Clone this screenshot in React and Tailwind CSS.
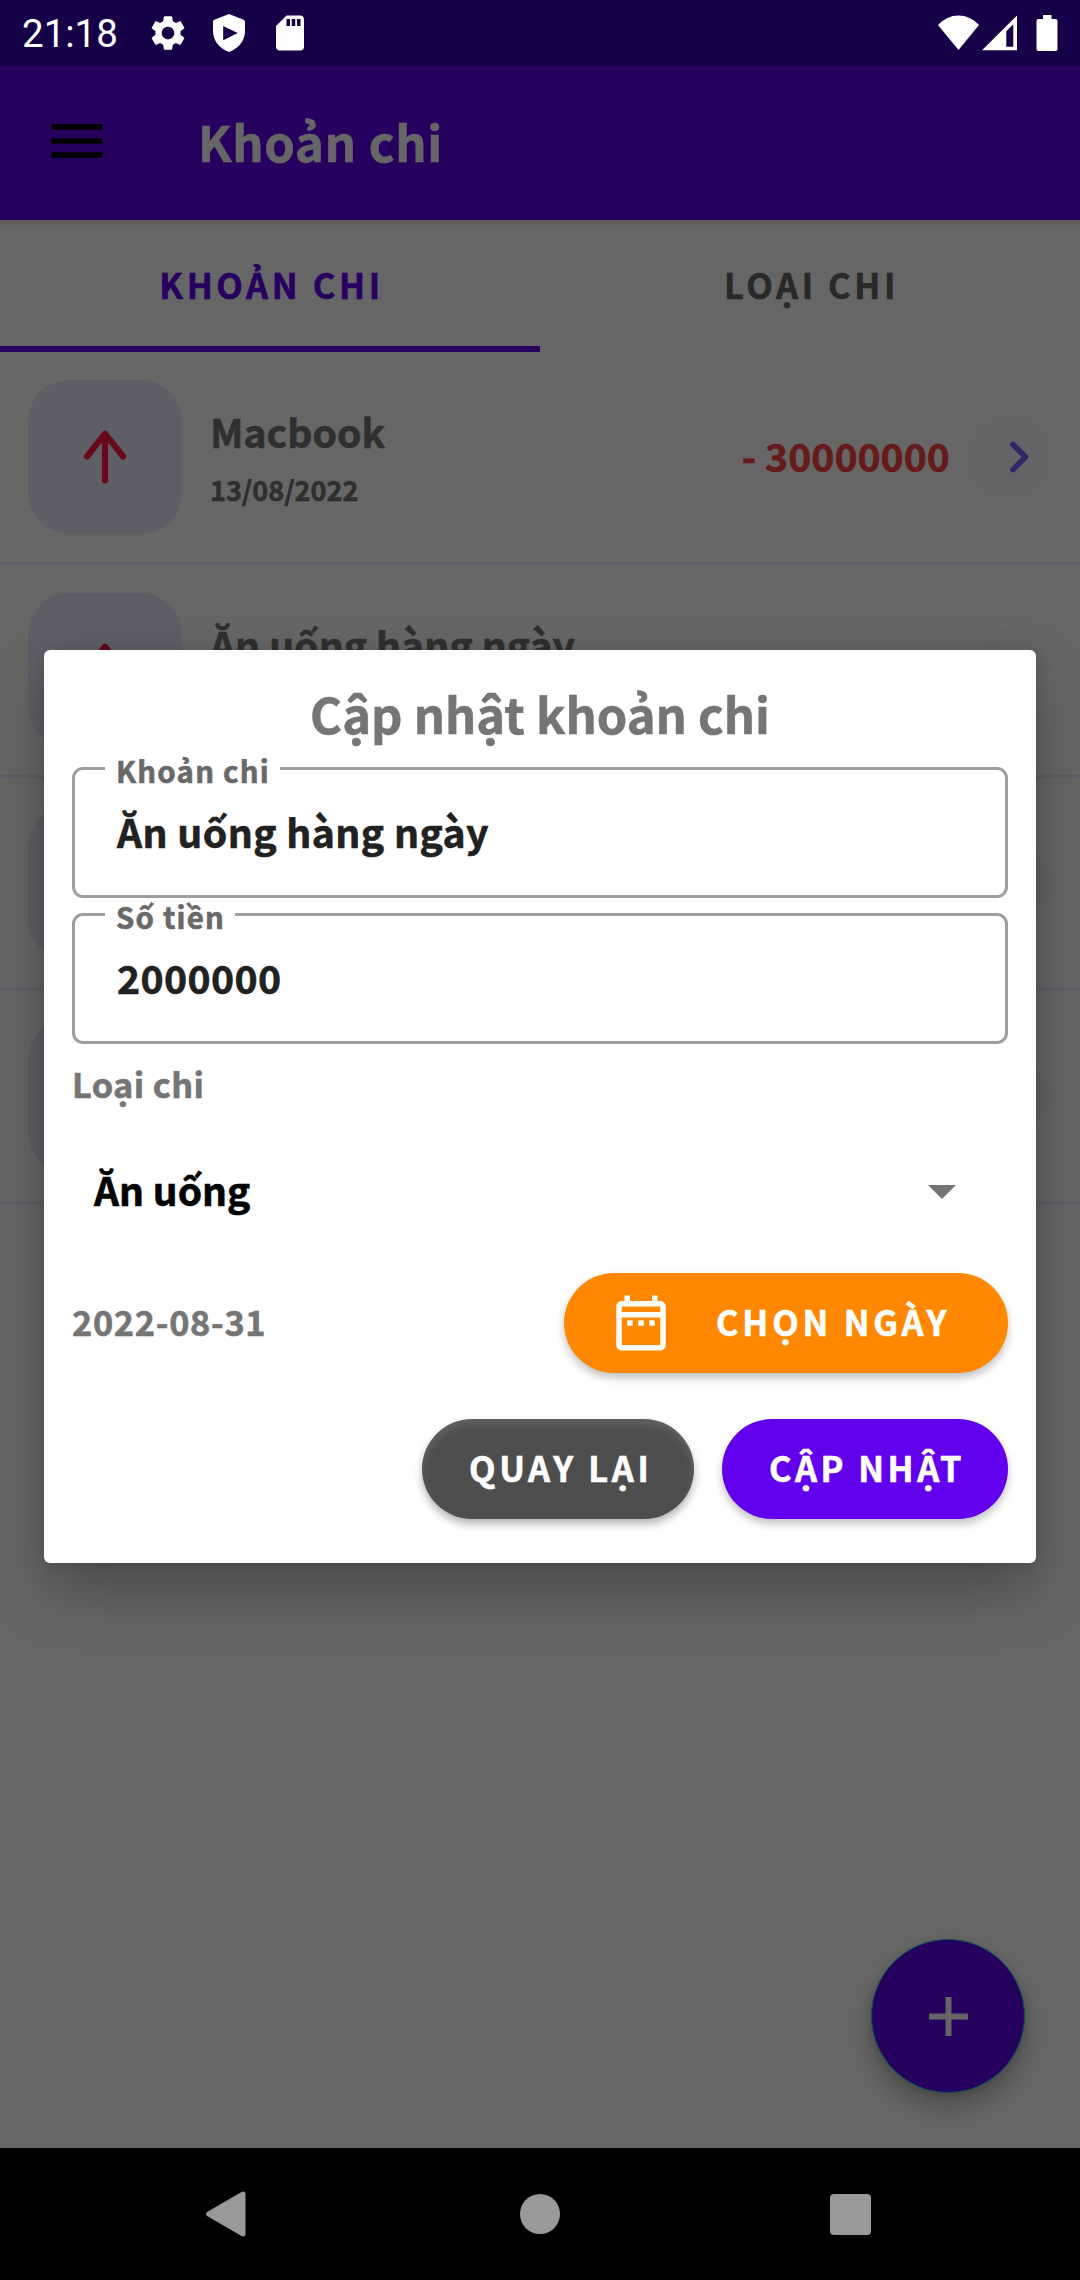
import React from "react";

const FONT = "font-['Noto_Sans_CJK_SC','Noto_Sans',sans-serif] font-bold [-webkit-text-stroke:0.6px]";

const rows = [
  { title: "Macbook", date: "13/08/2022", amount: "- 30000000" },
  { title: "Ăn uống hàng ngày" },
  {},
  {},
];

function SettingsIcon() {
  return (
    <svg viewBox="0 0 24 24" className="ml-[29px] size-[42px]" fill="currentColor">
      <path d="M19.14 12.94c.04-.3.06-.61.06-.94 0-.32-.02-.64-.07-.94l2.03-1.58c.18-.14.23-.41.12-.61l-1.92-3.32c-.12-.22-.37-.29-.59-.22l-2.39.96c-.5-.38-1.03-.7-1.62-.94l-.36-2.54c-.04-.24-.24-.41-.48-.41h-3.84c-.24 0-.43.17-.47.41l-.36 2.54c-.59.24-1.13.57-1.62.94l-2.39-.96c-.22-.08-.47 0-.59.22L2.74 8.87c-.12.21-.08.47.12.61l2.03 1.58c-.05.3-.09.63-.09.94s.02.64.07.94l-2.03 1.58c-.18.14-.23.41-.12.61l1.92 3.32c.12.22.37.29.59.22l2.39-.96c.5.38 1.03.7 1.62.94l.36 2.54c.05.24.24.41.48.41h3.84c.24 0 .44-.17.47-.41l.36-2.54c.59-.24 1.13-.56 1.62-.94l2.39.96c.22.08.47 0 .59-.22l1.92-3.32c.12-.22.07-.47-.12-.61l-2.01-1.58zM12 15.6c-1.98 0-3.6-1.62-3.6-3.6s1.62-3.6 3.6-3.6 3.6 1.62 3.6 3.6-1.62 3.6-3.6 3.6z" />
    </svg>
  );
}

function ShieldIcon() {
  return (
    <svg viewBox="0 0 32 38" className="ml-6 h-[38px] w-8" fill="currentColor" fillRule="evenodd">
      <path d="M16 0L30.6 5.7Q32 6.3 32 7.8V17C32 26.5 25.8 34.6 16 38C6.2 34.6 0 26.5 0 17V7.8Q0 6.3 1.4 5.7ZM10.2 12V26.3L24.7 19Z" />
    </svg>
  );
}

function SdCardIcon() {
  return (
    <svg viewBox="0 0 24 24" className="ml-6 size-[42px]" fill="currentColor">
      <path d="M18 2h-8L4.020 8 4 20c0 1.100.9 2 2 2h12c1.100 0 2-.9 2-2V4c0-1.100-.9-2-2-2zm-6 6h-2V4h2v4zm3 0h-2V4h2v4zm3 0h-2V4h2v4z" />
    </svg>
  );
}

function StatusBar() {
  return (
    <div className="absolute inset-x-0 top-0 z-20 flex h-[66px] items-center pl-[22px] pr-[22px] text-white">
      <span className="w-24 pt-[3px] font-['Roboto',sans-serif] text-[38.5px] leading-none font-normal whitespace-nowrap [-webkit-text-stroke:0]">21:18</span>
      <SettingsIcon />
      <ShieldIcon />
      <SdCardIcon />
      <svg viewBox="0 0 41 36" className="ml-auto h-9 w-[41px]" fill="currentColor">
        <path d="M20.5 35L0 10Q8.8 .5 20.5 .5T41 10Z" />
      </svg>
      <svg viewBox="0 0 35 36" className="ml-[3px] h-9 w-[35px]" fill="currentColor" fillRule="evenodd">
        <path d="M0 35.3H35V.5ZM24.3 16.3L31.3 9.2V31.7H24.3Z" />
      </svg>
      <svg viewBox="0 0 22 36" className="ml-[19px] h-9 w-[22px]" fill="currentColor">
        <path d="M7 0H15.5V4H19.5Q21.5 4 21.5 6V34Q21.5 36 19.5 36H2.5Q.5 36 .5 34V6Q.5 4 2.5 4H7Z" />
      </svg>
    </div>
  );
}

function ExpenseRow({ title, date, amount }) {
  return (
    <div className="flex h-[213px] items-start border-b-[3px] border-[#edebff] pt-7 pl-7 pr-[33px]">
      <div className="grid size-[154px] shrink-0 place-items-center rounded-[41px] bg-[#edebff]">
        <svg viewBox="0 0 44 54" className="h-[54px] w-11" fill="none" stroke="#ff1744" strokeWidth="6.2" strokeLinecap="round" strokeLinejoin="round">
          <path d="M22 50.5V4M4 26.5L22 3.7L40 26.5" />
        </svg>
      </div>
      <div className="mt-[22px] ml-7 flex flex-col whitespace-nowrap text-[#757575]">
        <div className="h-[58px] text-[39.2px] leading-[58px]">{title}</div>
        <div className="text-[27px] leading-[60px]">{date}</div>
      </div>
      <div className="ml-auto flex h-[154px] items-center">
        <div className="pb-[5px] text-[39.2px] leading-[58px] text-[#ff4444]">{amount}</div>
        <div className="ml-[21px] flex size-[76px] items-center rounded-full bg-[#f9f7fe] pl-[38px] shadow-[0_0_7px_4px_#fcfbfe]">
          <svg viewBox="0 0 20 32" className="h-8 w-5" fill="none" stroke="#7861ff" strokeWidth="5.6" strokeLinecap="round" strokeLinejoin="round">
            <path d="M4 3.5L16.5 16L4 28.5" />
          </svg>
        </div>
      </div>
    </div>
  );
}

function OutlinedField({ label, value }) {
  return (
    <div className="relative flex h-[131px] items-center rounded-[11px] border-[3px] border-[#9e9e9e] pb-[3px] pl-[42px]">
      <span className="absolute -top-[14px] left-[30px] bg-white pr-[10px] pl-[11px] text-[29.4px] leading-[29px] tracking-[1.2px] whitespace-nowrap text-[#696969]">
        {label}
      </span>
      <span className="text-[39.2px] leading-[58px] tracking-[0.4px] text-[#212121]">{value}</span>
    </div>
  );
}

const pill =
  "flex h-[100px] items-center rounded-full text-[34.4px] whitespace-nowrap text-white";

function Dialog() {
  return (
    <div className="flex w-[992px] flex-col rounded-md bg-white px-7 pt-[27px] pb-11 shadow-[0_28px_60px_rgba(0,0,0,0.28),0_0_12px_rgba(0,0,0,0.08)]">
      <h2 className="text-center text-[48.9px] leading-[71px] text-[#757575]">Cập nhật khoản chi</h2>
      <div className="mt-[19px] flex flex-col gap-[15px]">
        <OutlinedField label="Khoản chi" value="Ăn uống hàng ngày" />
        <OutlinedField label="Số tiền" value="2000000" />
      </div>
      <div className="mt-[14px] text-[34.3px] leading-[50px] tracking-[0.4px] text-[#757575]">Loại chi</div>
      <div className="mt-[17px] flex h-[132px] items-center justify-between pr-[52px] pl-[22px]">
        <span className="pb-1 text-[39px] leading-[58px] text-black">Ăn uống</span>
        <svg viewBox="0 0 28 14" className="mt-0.5 h-[14px] w-7" fill="#757575">
          <path d="M0 0H28L14 14Z" />
        </svg>
      </div>
      <div className="mt-4 flex items-center justify-between">
        <span className="pb-1 text-[34.3px] leading-[50px] tracking-[0.7px] text-[#757575]">2022-08-31</span>
        <button className={`${pill} w-[444px] bg-[#ff8800] pl-11 tracking-[3.8px] shadow-[0_5px_8px_rgba(0,0,0,0.24)]`}>
          <svg viewBox="0 0 24 24" className="size-[66px]" fill="currentColor">
            <path d="M7 11h2v2H7v-2zm14-5v14c0 1.100-.9 2-2 2H5c-1.110 0-2-.9-2-2l.01-14c0-1.100.88-2 1.990-2h1V2h2v2h8V2h2v2h1c1.100 0 2 .9 2 2zM5 8h14V6H5v2zm14 12V10H5v10zm-4-7h2v-2h-2v2zm-4 0h2v-2h-2v2z" />
          </svg>
          <span className="ml-[42px] pb-[3px]">CHỌN NGÀY</span>
        </button>
      </div>
      <div className="mt-[46px] flex justify-end gap-7">
        <button className={`${pill} w-[272px] bg-[#4d4d4d] pl-[47px] tracking-[3.7px] shadow-[0_5px_8px_rgba(0,0,0,0.3),inset_0_5px_8px_rgba(255,255,255,0.13)]`}>
          <span className="pb-[3px]">QUAY LẠI</span>
        </button>
        <button className={`${pill} w-[286px] bg-[#6200ee] pl-[47px] tracking-[3.5px] shadow-[0_5px_8px_rgba(0,0,0,0.24)]`}>
          <span className="pb-[3px]">CẬP NHẬT</span>
        </button>
      </div>
    </div>
  );
}

function NavigationBar() {
  return (
    <div className="absolute inset-x-0 bottom-0 z-20 flex h-[132px] items-center bg-black pl-[206px] text-[#999999]">
      <svg viewBox="0 0 40 46" className="h-[46px] w-10" fill="currentColor">
        <path d="M1 21L35.5 1Q39.5 -.5 39.5 3.5V42.5Q39.5 46.5 35.5 45L1 25Q-1 23 1 21Z" />
      </svg>
      <div className="ml-[274px] size-10 rounded-full bg-[#999999]" />
      <div className="ml-[270px] size-[41px] rounded-[4px] bg-[#999999]" />
    </div>
  );
}

export default function App() {
  return (
    <div className={`relative h-[2280px] w-[1080px] overflow-hidden bg-white ${FONT}`}>
      <div className="h-[66px] bg-[#3700b3]" />
      <header className="relative flex h-[154px] items-center bg-[#6200ee] pb-1 pl-[43px] shadow-[0_3px_8px_rgba(0,0,0,0.16)]">
        <svg viewBox="0 0 24 24" className="size-[68px]" fill="#000">
          <path d="M3 18h18v-2H3v2zm0-5h18v-2H3v2zm0-7v2h18V6H3z" />
        </svg>
        <h1 className="ml-[87px] text-[49px] leading-[72px] tracking-[0.7px] text-white">Khoản chi</h1>
      </header>
      <nav className="grid h-[132px] grid-cols-2 text-center text-[34.5px] leading-[128px] tracking-[3.6px]">
        <div className="h-[132px] border-b-[6px] border-[#6200ee] pl-[3px] text-[#6200ee]">KHOẢN CHI</div>
        <div className="h-[132px] pl-[3px] text-[#666666]">LOẠI CHI</div>
      </nav>
      <main>
        {rows.map((row, i) => (
          <ExpenseRow key={i} {...row} />
        ))}
      </main>
      <button className="absolute right-[55px] bottom-[187px] grid size-[154px] place-items-center rounded-full border border-[#03dac5] bg-[#6200ee] shadow-[0_14px_24px_rgba(0,0,0,0.26),0_2px_10px_rgba(0,0,0,0.12)]">
        <svg viewBox="0 0 39 39" className="size-[39px]" stroke="#fff" strokeWidth="6">
          <path d="M19.5 0V39M0 19.5H39" />
        </svg>
      </button>

      <div className="absolute inset-0 z-10 flex items-start justify-center bg-black/60 pt-[650px]">
        <Dialog />
      </div>

      <StatusBar />
      <NavigationBar />
    </div>
  );
}
